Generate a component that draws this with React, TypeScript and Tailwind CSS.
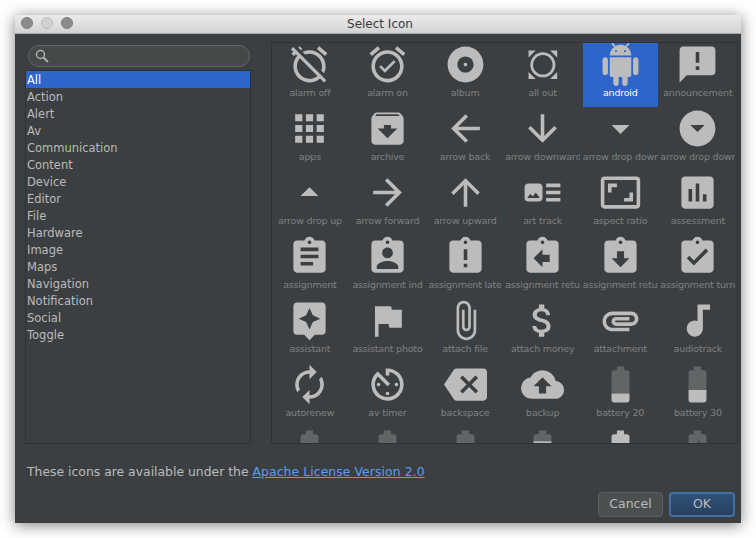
import type { IconType } from 'react-icons'
import {
  MdAlarmOff, MdAlarmOn, MdAlbum, MdAllOut, MdAnnouncement,
  MdApps, MdArchive, MdArrowBack, MdArrowDownward, MdArrowDropDown, MdArrowDropDownCircle,
  MdArrowDropUp, MdArrowForward, MdArrowUpward, MdArtTrack, MdAspectRatio, MdAssessment,
  MdAssignment, MdAssignmentInd, MdAssignmentLate, MdAssignmentReturn, MdAssignmentReturned, MdAssignmentTurnedIn,
  MdAssistant, MdAssistantPhoto, MdAttachFile, MdAttachMoney, MdAttachment, MdAudiotrack,
  MdAutorenew, MdAvTimer, MdBackspace, MdBackup, MdBattery20, MdBattery30,
  MdBattery50, MdBattery60, MdBattery80, MdBattery90, MdBatteryFull, MdBatteryCharging20,
} from 'react-icons/md'

// the full robot, react-icons only has the head
function AndroidIcon({ size, className }: { size: number; className?: string }) {
  return (
    <svg width={size} height={size} viewBox="0 0 24 24" fill="currentColor" className={className}>
      <path d="M6 18c0 .55.45 1 1 1h1v3.5c0 .83.67 1.5 1.5 1.5s1.5-.67 1.5-1.5V19h2v3.5c0 .83.67 1.5 1.5 1.5s1.5-.67 1.5-1.5V19h1c.55 0 1-.45 1-1V8H6v10zM3.5 8C2.67 8 2 8.67 2 9.5v7c0 .83.67 1.5 1.5 1.5S5 17.33 5 16.5v-7C5 8.67 4.33 8 3.5 8zm17 0c-.83 0-1.5.67-1.5 1.5v7c0 .83.67 1.5 1.5 1.5s1.5-.67 1.5-1.5v-7c0-.83-.67-1.5-1.5-1.5zm-4.97-5.84l1.3-1.3c.2-.2.2-.51 0-.71-.2-.2-.51-.2-.71 0l-1.48 1.48C13.85 1.23 12.95 1 12 1c-.96 0-1.86.23-2.66.63L7.85.15c-.2-.2-.51-.2-.71 0-.2.2-.2.51 0 .71l1.31 1.31C6.97 3.26 6 5.01 6 7h12c0-1.99-.97-3.75-2.47-4.84zM10 5H9V4h1v1zm5 0h-1V4h1v1z" />
    </svg>
  )
}

const categories = [
  'All', 'Action', 'Alert', 'Av', 'Communication', 'Content', 'Device', 'Editor', 'File',
  'Hardware', 'Image', 'Maps', 'Navigation', 'Notification', 'Social', 'Toggle',
]

const icons: [IconType | typeof AndroidIcon, string][] = [
  [MdAlarmOff, 'alarm off'],
  [MdAlarmOn, 'alarm on'],
  [MdAlbum, 'album'],
  [MdAllOut, 'all out'],
  [AndroidIcon, 'android'],
  [MdAnnouncement, 'announcement'],
  [MdApps, 'apps'],
  [MdArchive, 'archive'],
  [MdArrowBack, 'arrow back'],
  [MdArrowDownward, 'arrow downward'],
  [MdArrowDropDown, 'arrow drop down'],
  [MdArrowDropDownCircle, 'arrow drop down circle'],
  [MdArrowDropUp, 'arrow drop up'],
  [MdArrowForward, 'arrow forward'],
  [MdArrowUpward, 'arrow upward'],
  [MdArtTrack, 'art track'],
  [MdAspectRatio, 'aspect ratio'],
  [MdAssessment, 'assessment'],
  [MdAssignment, 'assignment'],
  [MdAssignmentInd, 'assignment ind'],
  [MdAssignmentLate, 'assignment late'],
  [MdAssignmentReturn, 'assignment return'],
  [MdAssignmentReturned, 'assignment returned'],
  [MdAssignmentTurnedIn, 'assignment turned in'],
  [MdAssistant, 'assistant'],
  [MdAssistantPhoto, 'assistant photo'],
  [MdAttachFile, 'attach file'],
  [MdAttachMoney, 'attach money'],
  [MdAttachment, 'attachment'],
  [MdAudiotrack, 'audiotrack'],
  [MdAutorenew, 'autorenew'],
  [MdAvTimer, 'av timer'],
  [MdBackspace, 'backspace'],
  [MdBackup, 'backup'],
  [MdBattery20, 'battery 20'],
  [MdBattery30, 'battery 30'],
  [MdBattery50, 'battery 50'],
  [MdBattery60, 'battery 60'],
  [MdBattery80, 'battery 80'],
  [MdBattery90, 'battery 90'],
  [MdBatteryFull, 'battery full'],
  [MdBatteryCharging20, 'battery charging 20'],
]

function SearchIcon() {
  return (
    <svg width="14" height="14" viewBox="0 0 14 14" fill="none" stroke="#aeb0b1" className="shrink-0">
      <circle cx="5.5" cy="5.5" r="4" strokeWidth="1.5" />
      <path d="M8.5 8.5 L13 13" strokeWidth="2" />
    </svg>
  )
}

export default function App() {
  return (
    <div className="w-[756px] h-[538px] bg-white pl-[15px] pt-[15px] font-['DejaVu_Sans',sans-serif] overflow-hidden">
      <div className="w-[726px] h-[508px] flex flex-col bg-[#3c3f41] shadow-[0_2px_14px_rgba(0,0,0,0.5)]">
        <div className="relative h-[19px] shrink-0 flex items-center justify-center pl-[4px] bg-gradient-to-b from-[#ebebeb] to-[#d3d3d3] border-b border-[#a8a8a8]">
          <div className="absolute left-[6px] top-[2px] flex gap-[8px]">
            <div className="w-[12px] h-[12px] rounded-full bg-[#8b8b8d] border border-[#7d7d7f]" />
            <div className="w-[12px] h-[12px] rounded-full bg-[#d2d2d2] border border-[#bdbdbd]" />
            <div className="w-[12px] h-[12px] rounded-full bg-[#8b8b8d] border border-[#7d7d7f]" />
          </div>
          <span className="text-[12px] leading-none text-[#3a3a3a]">Select Icon</span>
        </div>

        <div className="flex gap-[20px] pl-[10px] pt-[8px] h-[410px] shrink-0">
          <div className="w-[226px] pt-[3px] flex flex-col">
            <div className="ml-[3px] h-[22px] w-[222px] shrink-0 flex items-center pl-[6px] rounded-full bg-[#45494a] border border-[#646464]">
              <SearchIcon />
            </div>
            <div className="mt-[3px] flex-1 border border-[#2f3234] bg-[#3c3f41]">
              {categories.map((name, i) => (
                <div
                  key={name}
                  className={`h-[17px] pl-[1px] text-[11.5px] leading-[19px] ${i === 0 ? 'bg-[#2d65c8] text-white' : 'text-[#bbbbbb]'}`}
                >
                  {name}
                </div>
              ))}
            </div>
          </div>

          <div className="w-[467px] pl-[0.4px] border border-[#2f3234] overflow-hidden">
            <div className="grid grid-cols-[repeat(6,75px)] gap-x-[2.6px] auto-rows-[64px]">
              {icons.map(([Icon, label]) => {
                const selected = label === 'android'
                return (
                  <div key={label} className={`overflow-hidden ${selected ? 'bg-[#2d65c8]' : ''}`}>
                    <Icon size={43} className="block mx-auto text-[#bcbcbc]" />
                    <div className={`text-center whitespace-nowrap overflow-hidden text-[9.5px] tracking-[-0.2px] leading-[14px] ${selected ? 'text-white' : 'text-[#7e8182]'}`}>
                      {label}
                    </div>
                  </div>
                )
              })}
            </div>
          </div>
        </div>

        <div className="pl-[12px] pt-[19px] text-[12.4px] leading-[18px] text-[#bbbbbb]">
          These icons are available under the{' '}
          <a className="text-[#589df6] underline tracking-[0.08px]">Apache License Version 2.0</a>
        </div>

        <div className="flex justify-end gap-[6px] pr-[6px] pt-[11px]">
          <button className="w-[65px] h-[25px] rounded-[4px] border border-[#5e6060] bg-[#4b4f50] text-[12.5px] text-[#bbbbbb]">Cancel</button>
          <button className="w-[66px] h-[25px] rounded-[4px] border-2 border-[#44709f] bg-gradient-to-b from-[#31517a] to-[#27405f] text-[12.5px] text-[#bbbbbb]">OK</button>
        </div>
      </div>
    </div>
  )
}
